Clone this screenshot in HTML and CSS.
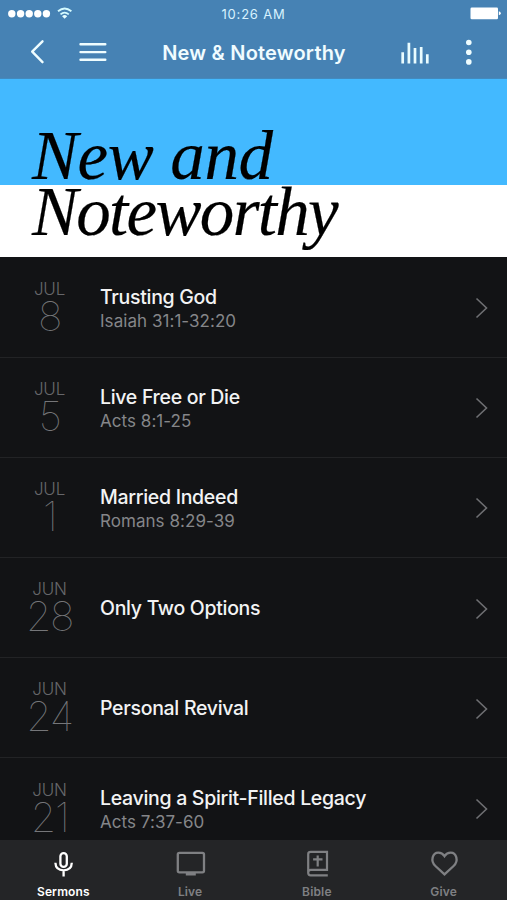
FILE: index.html
```html
<!DOCTYPE html>
<html lang="en">
<head>
<meta charset="utf-8">
<title>New &amp; Noteworthy</title>
<link rel="stylesheet" href="styles.css">
</head>
<body>
<div class="app">
  <header class="header">
    <div class="status">
      <svg class="signal" width="76" height="16" viewBox="0 0 76 16" fill="#fff">
        <circle cx="11.8" cy="7.7" r="3.7"/><circle cx="20.6" cy="7.7" r="3.7"/><circle cx="29.2" cy="7.7" r="3.7"/><circle cx="37.8" cy="7.7" r="3.7"/><circle cx="46.4" cy="7.7" r="3.7"/>
        <g fill="none" stroke="#d5fbff" stroke-width="1.8"><path d="M58 5.3Q64.6-.4 71.4 5.3"/><path d="M60.5 8.4Q64.6 4.8 68.8 8.4"/></g>
        <path fill="#e5fdff" d="M62.1 10.2Q64.6 7.9 67.2 10.2L64.6 12.8z"/>
      </svg>
      <time class="clock">10:26 AM</time>
      <svg class="battery" width="40" height="16" viewBox="0 0 40 16" fill="#fff"><rect x="3.5" y="1.4" width="27.5" height="11.8" rx="1.3"/><path d="M31.8 5.2q2 .5 2 2t-2 2z"/></svg>
    </div>
    <nav class="bar">
      <svg width="120" height="50" viewBox="0 0 120 50" fill="none" stroke="#effdff" stroke-width="2.4" stroke-linecap="round" stroke-linejoin="round"><path d="M42.5 14.3L32.2 24.7L42.5 35.2M80.5 17.3H105.3M80.5 25.1H105.3M80.5 32.8H105.3"/></svg>
      <h1 class="title">New &amp; Noteworthy</h1>
      <svg width="120" height="50" viewBox="0 0 120 50" fill="none" stroke="#e9fcff" stroke-width="2.7"><path d="M15.7 25.3V36.5M21.9 15.8V36.5M28 21.1V36.5M34.2 19.9V36.5M40.3 27.3V36.5"/><g fill="#effdff" stroke="none"><circle cx="81.8" cy="15.5" r="2.8"/><circle cx="81.8" cy="25.3" r="2.8"/><circle cx="81.8" cy="34.9" r="2.8"/></g></svg>
    </nav>
  </header>
  <section class="hero">
    <div class="hero-top"><span class="l1">New and</span></div>
    <div class="hero-bottom"><span class="l2">Noteworthy</span></div>
  </section>
  <main class="list">
    <article class="row"><div class="date"><span class="month">JUL</span><span class="day">8</span></div><div class="info"><h2>Trusting God</h2><p>Isaiah 31:1-32:20</p></div><svg class="chev" width="14" height="22"><path d="M1.5 1.5L11.5 11L1.5 20.5"/></svg></article>
    <article class="row"><div class="date"><span class="month">JUL</span><span class="day">5</span></div><div class="info"><h2>Live Free or Die</h2><p>Acts 8:1-25</p></div><svg class="chev" width="14" height="22"><path d="M1.5 1.5L11.5 11L1.5 20.5"/></svg></article>
    <article class="row"><div class="date"><span class="month">JUL</span><span class="day">1</span></div><div class="info"><h2>Married Indeed</h2><p>Romans 8:29-39</p></div><svg class="chev" width="14" height="22"><path d="M1.5 1.5L11.5 11L1.5 20.5"/></svg></article>
    <article class="row"><div class="date"><span class="month">JUN</span><span class="day">28</span></div><div class="info"><h2>Only Two Options</h2></div><svg class="chev" width="14" height="22"><path d="M1.5 1.5L11.5 11L1.5 20.5"/></svg></article>
    <article class="row"><div class="date"><span class="month">JUN</span><span class="day">24</span></div><div class="info"><h2>Personal Revival</h2></div><svg class="chev" width="14" height="22"><path d="M1.5 1.5L11.5 11L1.5 20.5"/></svg></article>
    <article class="row"><div class="date"><span class="month">JUN</span><span class="day">21</span></div><div class="info"><h2>Leaving a Spirit-Filled Legacy</h2><p>Acts 7:37-60</p></div><svg class="chev" width="14" height="22"><path d="M1.5 1.5L11.5 11L1.5 20.5"/></svg></article>
  </main>
  <footer class="tabs">
    <div class="tab active"><svg width="36" height="34" viewBox="0 0 36 34" fill="none" stroke="currentColor" stroke-width="2.3"><rect x="15.4" y="4.1" width="6.4" height="13.8" rx="3.2"/><path d="M10.4 13.8Q10.7 21.3 18.6 21.3T26.8 13.8M18.6 21.5V27.5"/></svg><span>Sermons</span></div>
    <div class="tab"><svg width="36" height="34" viewBox="0 0 36 34" fill="none" stroke="currentColor" stroke-width="2.3"><rect x="5.8" y="3.9" width="26.2" height="19.5" rx="1.6"/><path stroke-width="2.8" d="M13.8 25.1H23.8"/></svg><span>Live</span></div>
    <div class="tab"><svg width="36" height="34" viewBox="0 0 36 34" fill="none" stroke="currentColor" stroke-width="2.2"><path d="M28.8 26.4H11.7Q9.2 26.4 9.2 23.8V5.2Q9.2 2.8 11.7 2.8H28V20.8H11.7Q9.2 20.8 9.2 23.6M18.7 6.4V17.6M14.1 10.3H23.5"/></svg><span>Bible</span></div>
    <div class="tab"><svg width="36" height="34" viewBox="0 0 36 34" fill="none" stroke="currentColor" stroke-width="2.3"><path d="M18.5 25.4L9.4 17C4 11.8 6.6 3.6 12.3 3.6C15 3.6 17.1 5 18.5 7.2C19.9 5 22 3.6 24.7 3.6C30.4 3.6 33 11.8 27.6 17Z"/></svg><span>Give</span></div>
  </footer>
</div>
</body>
</html>
```
FILE: styles.css
```css
* { box-sizing: border-box; }
body { margin: 0; background: #121315; font-family: Inter, "Liberation Sans", sans-serif; }
h1, h2, p { margin: 0; }
svg { display: block; flex: none; }
.app { width: 507px; height: 900px; display: flex; flex-direction: column; overflow: hidden; }
.header { height: 79px; flex: none; background: #4682b4; border-bottom: 1px solid #428abf; }
.status { height: 27px; display: grid; grid-template-columns: 120px 1fr 120px; padding-top: 6px; }
.battery { margin-left: 80px; }
.clock { text-align: center; font-size: 13px; line-height: 16px; letter-spacing: .8px; color: #d8f2ff; }
.bar { height: 50px; display: grid; grid-template-columns: 120px 1fr 120px; }
.title { text-align: center; font-size: 20px; line-height: 52px; font-weight: 600; letter-spacing: .2px; padding-left: 1px; color: #f0fcff; white-space: nowrap; }
.hero { height: 178px; flex: none; font: italic 69px/56px "Liberation Serif", serif; color: #000; -webkit-text-stroke: .2px #000; white-space: nowrap; }
.hero-top { height: 106px; padding: 49px 0 0 32px; background: #43b9ff; }
.hero-bottom { height: 72px; padding-left: 32px; background: #fff; }
.hero-top span, .hero-bottom span { display: block; }
.l1 { letter-spacing: -.4px; }
.l2 { letter-spacing: -1.7px; line-height: 55px; }
.list { flex: 1; min-height: 0; overflow: hidden; padding-top: .5px; }
.row { height: 100.2px; display: flex; align-items: center; border-bottom: 1px solid #222325; padding-right: 18px; }
.date { width: 99px; margin-right: 1px; display: flex; flex-direction: column; align-items: center; color: #66676a; padding-bottom: 3px; }
.month { font-size: 17px; line-height: 20px; font-weight: 300; letter-spacing: -.2px; }
.day { font-size: 41px; line-height: 34px; font-weight: 100; color: #7b7c7f; letter-spacing: -1.4px; opacity: .95; }
.info { flex: 1; white-space: nowrap; padding-top: 2px; }
.info h2 { font-size: 19.5px; line-height: 25px; font-weight: 500; color: #f3f3f4; letter-spacing: -.3px; }
.info p { font-size: 17px; line-height: 22px; color: #858689; letter-spacing: .05px; }
.chev { fill: none; stroke: #6e6f72; stroke-width: 1.6; margin-top: 2px; }
.tabs { height: 60px; flex: none; display: grid; grid-template-columns: repeat(4, 1fr); background: #242527; padding-top: 9px; }
.tab { display: flex; flex-direction: column; align-items: center; color: #7f8083; }
.tab span { font-size: 12px; line-height: 18px; font-weight: 600; letter-spacing: .15px; }
.active { color: #fff; }
```
